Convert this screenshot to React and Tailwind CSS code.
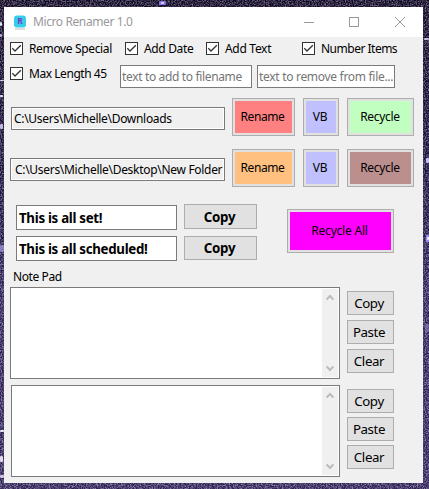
const STARS = [
  [159, 1, 7, 4, '#8d7bea', 0.9], [161, 2, 3, 2, '#d9d2ff', 1], [0, 22, 2, 4, '#e6e2f5', 1], [0, 34, 2, 3, '#b9addb', 1],
  [0, 80, 4, 1, '#d9d3ea', 1], [424, 38, 5, 2, '#c3bce0', 1], [0, 95, 3, 2, '#ece8f7', 1], [0, 124, 3, 5, '#c2b9e2', 1],
  [426, 158, 3, 5, '#c5bdec', 1], [426, 235, 3, 7, '#9a8cf0', 1], [427, 237, 2, 3, '#f1eeff', 1], [0, 245, 4, 7, '#a79ae0', 0.7],
  [0, 430, 4, 2, '#e8e4f5', 1], [0, 456, 3, 6, '#e0d8ec', 1], [0, 475, 4, 3, '#cfc5e4', 1], [425, 324, 4, 8, '#8e82b8', 0.6],
];

function Backdrop() {
  return (
    <svg className="absolute inset-0" width="429" height="489" aria-hidden="true">
      <defs>
        <linearGradient id="sky" x1="0" y1="0" x2="0" y2="1">
          <stop offset="0" stopColor="#181026" />
          <stop offset="0.35" stopColor="#282048" />
          <stop offset="0.6" stopColor="#44376e" />
          <stop offset="1" stopColor="#463870" />
        </linearGradient>
        <filter id="grain" x="0" y="0" width="100%" height="100%" colorInterpolationFilters="sRGB">
          <feTurbulence type="fractalNoise" baseFrequency="0.75" numOctaves="2" seed="4" />
          <feColorMatrix values="2.6 0 0 0 -0.95  2.6 0 0 0 -0.98  2.6 0 0 0 -0.85  0 0 0 0 1" />
        </filter>
      </defs>
      <rect width="429" height="489" fill="url(#sky)" />
      <rect width="429" height="489" filter="url(#grain)" opacity="0.38" />
      {STARS.map(([x, y, w, h, c, o], i) => (
        <rect key={i} x={x} y={y} width={w} height={h} rx="1" fill={c} opacity={o} />
      ))}
    </svg>
  );
}

function Check({ label, className }) {
  return (
    <label className={`flex h-[13px] shrink-0 items-center gap-[6px] ${className}`}>
      <svg width="13" height="13" viewBox="0 0 13 13" className="shrink-0">
        <rect x="0.5" y="0.5" width="12" height="12" fill="#fff" stroke="#333" />
        <path d="M2.3 6.3 L5 9 L10.8 3.2" fill="none" stroke="#333" strokeWidth="1.3" />
      </svg>
      <span className="whitespace-nowrap">{label}</span>
    </label>
  );
}

function ColorButton({ children, className }) {
  return (
    <div className="shrink-0 border border-[#adadad] bg-[#e1e1e1] p-[2px]">
      <button className={`flex items-center justify-center whitespace-nowrap ${className}`}>{children}</button>
    </div>
  );
}

function PlainButton({ children, className }) {
  return (
    <button className={`flex shrink-0 items-center justify-center border border-[#adadad] bg-[#e1e1e1] whitespace-nowrap ${className}`}>
      {children}
    </button>
  );
}

function PathRow({ path, boxClass, renameClass, recycleClass }) {
  return (
    <div className="flex h-[38px] items-start">
      <div className={`mt-[9px] flex h-[23px] shrink-0 items-center overflow-hidden border border-[#7a7a7a] whitespace-nowrap shadow-[inset_0_0_0_1px_#fff] ${boxClass}`}>
        {path}
      </div>
      <div className="ml-[7px] flex gap-[8px]">
        <ColorButton className={`h-[32px] w-[57px] pr-[2px] tracking-[-0.4px] ${renameClass}`}>Rename</ColorButton>
        <ColorButton className="h-[32px] w-[30px] bg-[#c0c0ff] pr-[2px]">VB</ColorButton>
        <ColorButton className={`h-[32px] w-[61px] pr-[1px] ${recycleClass}`}>Recycle</ColorButton>
      </div>
    </div>
  );
}

function Arrow({ down }) {
  return (
    <svg width="8" height="7" viewBox="0 0 8 7" className={down ? 'rotate-180' : ''}>
      <path d="M0.6 5.6 L4 2 L7.4 5.6" fill="none" stroke="#bcbcbc" strokeWidth="2" />
    </svg>
  );
}

function NotePad({ boxClass, buttonsClass }) {
  return (
    <div className="flex h-[92px] items-start">
      <div className={`flex h-[92px] shrink-0 justify-end border border-[#7a7a7a] bg-white p-[1px] ${boxClass}`}>
        <div className="flex w-[16px] flex-col items-center justify-between bg-[#f0f0f0] py-[5px]">
          <Arrow />
          <Arrow down />
        </div>
      </div>
      <div className={`ml-[7px] flex flex-col text-[13.3px] tracking-[-0.4px] ${buttonsClass}`}>
        <PlainButton className="h-[24px] w-[47px] pr-[3px]">Copy</PlainButton>
        <PlainButton className="h-[24px] w-[47px] pr-[3px]">Paste</PlainButton>
        <PlainButton className="h-[24px] w-[47px] pr-[3px]">Clear</PlainButton>
      </div>
    </div>
  );
}

function MessageRow({ text, fieldClass, buttonClass }) {
  return (
    <div className="flex items-start">
      <div className={`flex h-[25px] w-[161px] items-center border border-[#7a7a7a] bg-white pl-[2px] whitespace-nowrap ${fieldClass}`}>{text}</div>
      <PlainButton className={`ml-[7px] w-[73px] pr-[2px] ${buttonClass}`}>Copy</PlainButton>
    </div>
  );
}

export default function App() {
  return (
    <div className="relative h-[489px] w-[429px] overflow-hidden bg-[#4a4068] pt-[7px] pl-[4px] font-['Noto_Sans','Open_Sans',sans-serif] text-[12px] leading-[16px] tracking-[-0.3px] text-black">
      <Backdrop />
      <main className="relative h-[476px] w-[419px] overflow-hidden bg-[#f0f0f0]">
        <header className="flex h-[30px] items-center bg-white text-[#999]">
          <svg width="12" height="15" viewBox="0 0 12 15" className="ml-[10px] shrink-0">
            <rect x="0" y="0.5" width="12" height="12" rx="3" fill="#35cdea" />
            <text x="6" y="9.3" textAnchor="middle" fontSize="8" fontWeight="bold" letterSpacing="0" fill="#7a35c4">R</text>
            <path d="M1 14H11" stroke="#bbb" strokeWidth="1" />
          </svg>
          <span className="ml-[7px] tracking-[-0.4px] whitespace-nowrap">Micro Renamer 1.0</span>
          <svg width="102" height="12" viewBox="0 0 102 12" className="mt-[-1px] ml-auto mr-[17px] shrink-0" fill="none" stroke="#999">
            <path d="M0 6.5H10" />
            <rect x="45.5" y="1.5" width="9" height="9" />
            <path d="M91 1L101 11M101 1L91 11" />
          </svg>
        </header>

        <section className="mt-[5px] flex h-[13px] pl-[6px]">
          <Check label="Remove Special" className="w-[115px] tracking-[-0.35px]" />
          <Check label="Add Date" className="w-[81px] tracking-[-0.35px]" />
          <Check label="Add Text" className="w-[96px] tracking-[-0.3px]" />
          <Check label="Number Items" className="tracking-[-0.5px]" />
        </section>

        <section className="mt-[10px] flex h-[23px] items-start pl-[6px]">
          <Check label="Max Length 45" className="mt-[2px] w-[110px] tracking-[-0.45px]" />
          <div className="flex h-[23px] w-[132px] items-center overflow-hidden border border-[#7a7a7a] bg-white pl-[1px] tracking-[-0.35px] whitespace-nowrap text-[#757575]">
            text to add to filename
          </div>
          <div className="ml-[5px] flex h-[23px] w-[138px] items-center overflow-hidden border border-[#7a7a7a] bg-white pl-[1px] whitespace-nowrap text-[#757575]">
            text to remove from file...
          </div>
        </section>

        <section className="mt-[10px] flex flex-col gap-[13px] pl-[6px]">
          <PathRow path={'C:\\Users\\Michelle\\Downloads'} boxClass="ml-[1px] w-[214px] pl-[2px]" renameClass="bg-[#ff8080]" recycleClass="bg-[#c0ffc0]" />
          <PathRow path={'C:\\Users\\Michelle\\Desktop\\New Folder'} boxClass="w-[215px] pl-[4px]" renameClass="bg-[#ffc080]" recycleClass="bg-[#bc8f8f]" />
        </section>

        <section className="mt-[17px] flex h-[57px] items-start pl-[12px]">
          <div className="flex flex-col text-[13.3px] font-bold tracking-[-0.3px]">
            <MessageRow text="This is all set!" fieldClass="mt-[1px]" buttonClass="h-[25px]" />
            <div className="h-[6px]" />
            <MessageRow text="This is all scheduled!" fieldClass="" buttonClass="h-[24px]" />
          </div>
          <div className="mt-[5px] ml-[30px]">
            <ColorButton className="h-[38px] w-[101px] bg-[#ff00ff] pr-[2px] tracking-[-0.2px]">Recycle All</ColorButton>
          </div>
        </section>

        <h2 className="mt-[8px] h-[16px] pl-[9px] tracking-[-0.4px]">Note Pad</h2>

        <section className="mt-[2px] flex flex-col gap-[6px] pl-[6px]">
          <NotePad boxClass="w-[330px]" buttonsClass="mt-[4px] gap-[5px]" />
          <NotePad boxClass="ml-[1px] w-[329px]" buttonsClass="mt-[4px] gap-[4px]" />
        </section>
      </main>
    </div>
  );
}
